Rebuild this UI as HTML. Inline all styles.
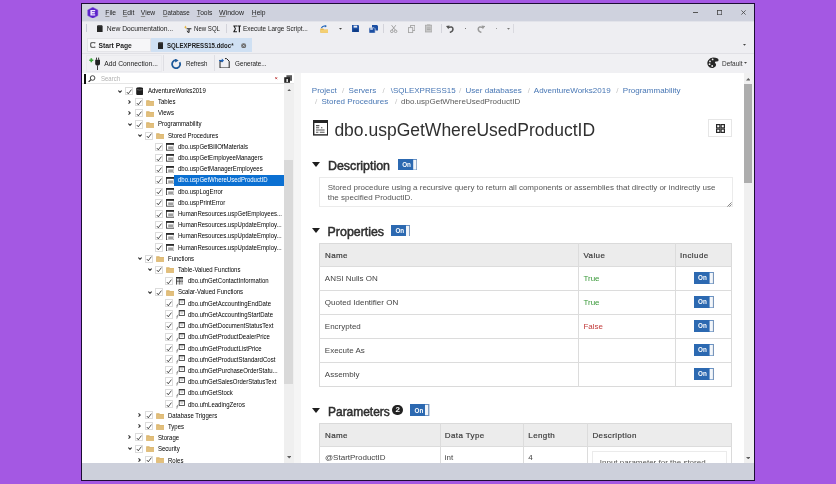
<!DOCTYPE html>
<html><head><meta charset="utf-8"><style>
*{margin:0;padding:0;box-sizing:border-box}
html,body{width:836px;height:484px;overflow:hidden;background:#a458e3;font-family:"Liberation Sans", sans-serif}
.r{position:absolute;display:block}
.t{position:absolute;white-space:nowrap;color:#333}
.t u{text-decoration:underline;text-decoration-color:#8a8a8a;text-decoration-thickness:0.6px;text-underline-offset:1.2px}
.cb{position:absolute;width:8.4px;height:8.2px;border:0.8px solid #dcdcdc;box-sizing:border-box;background:#fff}
.cb svg{position:absolute;left:-0.3px;top:-0.3px}
.fold{position:absolute;width:7.8px;height:5.8px;background:#dfbb72;border-top:1px solid #e9cd92;box-sizing:border-box}
.dbi{position:absolute;width:6.6px;height:8px;background:#1e1e1e;border-radius:3.3px/1.8px}
.proc{position:absolute;width:8.6px;height:7.2px;border:0.9px solid #333;border-top:1.8px solid #222;box-sizing:border-box;background:#fff}
.proc i{position:absolute;left:1.2px;top:1.2px;width:4.6px;height:2.6px;background:#9a9a9a}
.tvf{position:absolute;width:7.4px;height:8px;border-top:1.6px solid #333;border-left:0.9px solid #444;border-right:0.9px solid #444;box-sizing:border-box;background:linear-gradient(90deg,transparent 45%,#666 45%,#666 58%,transparent 58%)}
.svf{position:absolute;width:8px;height:8px}
.svf::before{content:"";position:absolute;left:3px;top:0;width:5px;height:5.6px;border:0.9px solid #555;border-top:1.6px solid #444;box-sizing:border-box}
.svf::after{content:"";position:absolute;left:0.6px;top:4px;width:1.6px;height:3.8px;border-left:0.9px solid #777;transform:skewX(-25deg)}
.tt{position:absolute;font-size:6.7px;line-height:11px;color:#000;white-space:nowrap;transform:scaleX(0.9);transform-origin:0 0}
.tt.sel{color:#fff}
.selbg{position:absolute;background:#0b70d2}

.t{position:absolute;white-space:nowrap;color:#333}
.bl{color:#4776b4}
.sl{color:#c4c4c4}
.gr{color:#5a5a5a}
.h1{color:#303030}
.h2{color:#2e2e2e;-webkit-text-stroke:0.5px #2e2e2e}
.gt{color:#555}
.th{color:#3c3c3c;letter-spacing:0.4px;-webkit-text-stroke:0.2px #3c3c3c}
.td{color:#444}
.gv{color:#3a9a3a}
.rv{color:#c23b3b}
.picon{position:absolute;border:1.5px solid #333;border-top:3px solid #333;background:#fff}
.picon i{position:absolute;left:2px;top:2px;width:5px;height:3px;border-top:1.2px solid #555;border-bottom:1.2px solid #555}
.picon b{position:absolute;left:2px;top:6.5px;width:8px;height:1.2px;background:#777}
.gbtn{position:absolute;border:1px solid #e6e6e6;background:#fff}
.gbtn i{position:absolute;width:4px;height:4px;border:1.2px solid #333;border-radius:0.5px}
.tri{position:absolute;width:0;height:0;border-left:4px solid transparent;border-right:4px solid transparent;border-top:5px solid #1e1e1e}
.tog{position:absolute}
.tog span{position:absolute;left:4.2px;top:2.4px;font-size:6.3px;line-height:7px;font-weight:bold;color:#fff}
.ta{position:absolute;border:1px solid #ebebeb;background:#fff}
.grip{position:absolute;width:5px;height:5px;background:linear-gradient(135deg,transparent 45%,#999 45%,#999 55%,transparent 55%,transparent 70%,#999 70%,#999 80%,transparent 80%)}
.box{position:absolute;border:1px solid #dadada;background:#fff}
.thbg{position:absolute;background:#ececec}
.hl{position:absolute;height:1px;background:#dcdcdc}
.vl{position:absolute;width:1px;background:#dcdcdc}
.badge{position:absolute;width:11.3px;height:11.3px;border-radius:50%;background:#222;color:#fff;font-weight:bold;font-size:8px;line-height:11.3px;text-align:center}

</style></head><body style="filter:blur(0.5px)">
<div class="r" style="left:81px;top:3px;width:674px;height:478px;background:#eeeef2;border:1px solid #1c0c34;box-sizing:border-box"></div>
<div class="r" style="left:82px;top:4px;width:672px;height:16.6px;background:#cfd2de;"></div>
<div class="r" style="left:82px;top:20.6px;width:672px;height:0.8px;background:#e2e3ea;"></div>
<svg class="r" style="left:87.2px;top:6.8px" width="11.6" height="11.6" viewBox="0 0 11.6 11.6"><path d="M5.8 0.2 L10.9 3 L10.9 8.6 L5.8 11.4 L0.7 8.6 L0.7 3 Z" fill="#5b23c8" stroke="#8a5ae6" stroke-width="0.5"/><path d="M3.4 2.9 H8.2 V4.2 H4.9 V5.1 H7.8 V6.4 H4.9 V7.3 H8.2 V8.6 H3.4 Z" fill="#efe4ff"/></svg>
<div class="t" style="left:105.3px;top:8.00px;font-size:6.7px;line-height:9px;color:#252525"><u>F</u>ile</div>
<div class="t" style="left:122.8px;top:8.00px;font-size:6.7px;line-height:9px;color:#252525"><u>E</u>dit</div>
<div class="t" style="left:140.8px;top:8.00px;font-size:6.7px;line-height:9px;color:#252525"><u>V</u>iew</div>
<div class="t" style="left:162.9px;top:8.00px;font-size:6.7px;line-height:9px;color:#252525;transform:scaleX(0.93);transform-origin:0 0"><u>D</u>atabase</div>
<div class="t" style="left:196.8px;top:8.00px;font-size:6.7px;line-height:9px;color:#252525"><u>T</u>ools</div>
<div class="t" style="left:218.8px;top:8.00px;font-size:6.7px;line-height:9px;color:#252525;transform:scaleX(1.05);transform-origin:0 0"><u>W</u>indow</div>
<div class="t" style="left:251.8px;top:8.00px;font-size:6.7px;line-height:9px;color:#252525"><u>H</u>elp</div>
<div class="r" style="left:693.4px;top:12.4px;width:4.4px;height:0.8px;background:#555;"></div>
<svg class="r" style="left:716.8px;top:9.8px" width="5.4" height="5.4" viewBox="0 0 5.4 5.4"><rect x="0.6" y="0.6" width="4.2" height="4.2" fill="none" stroke="#444" stroke-width="0.8"/></svg>
<svg class="r" style="left:740.8px;top:10px" width="5" height="5" viewBox="0 0 5 5"><path d="M0.4 0.4 L4.6 4.6 M4.6 0.4 L0.4 4.6" stroke="#444" stroke-width="0.8"/></svg>
<div class="r" style="left:86.3px;top:23.8px;width:1px;height:8px;background:#c5c8d6;"></div>
<svg class="r" style="left:97.4px;top:24.8px" width="5.6" height="7.4" viewBox="0 0 5.6 7.4"><rect x="0" y="0.8" width="5.6" height="6.6" fill="#262626"/><rect x="0.5" y="0" width="4.6" height="1.2" fill="#555"/></svg>
<div class="t" style="left:106.8px;top:24.00px;font-size:6.75px;line-height:9px;color:#222">New Documentation...</div>
<svg class="r" style="left:183.5px;top:24.8px" width="8" height="8" viewBox="0 0 8 8"><path d="M1.5 0.5 L2.1 1.8 L3.4 2.2 L2.1 2.6 L1.5 3.9 L0.9 2.6 L-0.4 2.2 L0.9 1.8Z" fill="#e7b53a"/><path d="M2.6 3.2 H7.4 V4.2 H5.6 V7.4 H4.4 V4.2 H2.6Z" fill="#2a2a2a"/><path d="M3.2 5.6 Q3.2 7.6 5 7.6" stroke="#2a2a2a" stroke-width="0.9" fill="none"/></svg>
<div class="t" style="left:193.8px;top:24.00px;font-size:6.75px;line-height:9px;color:#222;transform:scaleX(0.9);transform-origin:0 0">New SQL</div>
<div class="r" style="left:226.3px;top:24px;width:0.8px;height:9px;background:#d3d3da;"></div>
<svg class="r" style="left:232.6px;top:25px" width="8.6" height="7.6" viewBox="0 0 8.6 7.6"><path d="M0.3 0.4 H4 V1.4 H1.8 L3 3.8 L1.8 6.2 H4 V7.2 H0.3 V6.6 L1.9 3.8 L0.3 1 Z" fill="#1e1e1e"/><path d="M4.4 0.4 H8.4 V1.5 H7 V7.2 H5.8 V1.5 H4.4Z" fill="#1e1e1e"/></svg>
<div class="t" style="left:243.0px;top:24.00px;font-size:6.75px;line-height:9px;color:#222;transform:scaleX(0.95);transform-origin:0 0">Execute Large Script...</div>
<svg class="r" style="left:319.8px;top:24.6px" width="8.6" height="8" viewBox="0 0 8.6 8"><path d="M0.3 3.6 H3.2 L4 4.4 H8.2 V7.7 H0.3Z" fill="#e9b94c"/><path d="M0.8 5 H8 V7.7 H0.8Z" fill="#f4cf73"/><path d="M1.5 3.2 Q2.2 0.6 5.4 1" stroke="#1f63b8" stroke-width="1.1" fill="none"/><path d="M4.8 0 L7 1.1 L4.9 2.4Z" fill="#1f63b8"/></svg>
<svg class="r" style="left:338.6px;top:27.8px" width="3" height="2" viewBox="0 0 3 2"><path d="M0 0 H3 L1.5 1.8Z" fill="#444"/></svg>
<svg class="r" style="left:351.5px;top:25.3px" width="7.4" height="7" viewBox="0 0 7.4 7"><path d="M0 0 H6.2 L7.4 1.2 V7 H0Z" fill="#1c4fa3"/><rect x="1.6" y="0.6" width="3.6" height="2" fill="#e9eef8"/><rect x="1.3" y="4.3" width="4.8" height="2.7" fill="#0f3c86"/></svg>
<svg class="r" style="left:368.6px;top:24.6px" width="9.2" height="8.2" viewBox="0 0 9.2 8.2"><path d="M3 0 H8 L9.2 1.2 V5.4 H3Z" fill="#1c4fa3"/><path d="M0 2.8 H5.2 L6.2 3.8 V8.2 H0Z" fill="#1c4fa3" stroke="#eeeef2" stroke-width="0.6"/><rect x="1.2" y="3.3" width="2.6" height="1.4" fill="#e9eef8"/></svg>
<div class="r" style="left:383px;top:24px;width:0.8px;height:9px;background:#d3d3da;"></div>
<svg class="r" style="left:390.3px;top:24.6px" width="7.4" height="8" viewBox="0 0 7.4 8"><path d="M1.6 0.2 L5.4 5.2 M5.8 0.2 L2 5.2" stroke="#9a9a9a" stroke-width="0.9"/><circle cx="1.8" cy="6.3" r="1.3" fill="none" stroke="#9a9a9a" stroke-width="0.9"/><circle cx="5.6" cy="6.3" r="1.3" fill="none" stroke="#9a9a9a" stroke-width="0.9"/></svg>
<svg class="r" style="left:407.8px;top:24.6px" width="7.4" height="8" viewBox="0 0 7.4 8"><rect x="2.6" y="0.5" width="4.2" height="5" fill="none" stroke="#a5a5a5" stroke-width="0.9"/><rect x="0.5" y="2.6" width="4.2" height="5" fill="#eeeef2" stroke="#a5a5a5" stroke-width="0.9"/></svg>
<svg class="r" style="left:424.8px;top:24.4px" width="7.4" height="8.4" viewBox="0 0 7.4 8.4"><rect x="0.5" y="1.2" width="6.4" height="6.8" fill="#c9c9c9" stroke="#a8a8a8" stroke-width="0.8"/><rect x="2" y="0.3" width="3.4" height="1.8" fill="#b5b5b5"/><path d="M1.8 4 H5.6 M1.8 5.6 H5.6" stroke="#9a9a9a" stroke-width="0.7"/></svg>
<div class="r" style="left:440.8px;top:24px;width:0.8px;height:9px;background:#d3d3da;"></div>
<svg class="r" style="left:446px;top:24.8px" width="8.6" height="8" viewBox="0 0 8.6 8"><path d="M1.8 2.6 Q6.8 0.8 7 4 Q7 6.6 3.8 7.4" stroke="#555" stroke-width="1.5" fill="none"/><path d="M0 1 L3.6 0.6 L2.4 4.2Z" fill="#555"/></svg>
<div class="r" style="left:464.6px;top:28.3px;width:1.5px;height:1.2px;background:#777;"></div>
<svg class="r" style="left:477.3px;top:24.8px" width="8.2" height="8" viewBox="0 0 8.2 8"><path d="M6.4 2.6 Q1.4 0.8 1.2 4 Q1.2 6.6 4.4 7.4" stroke="#9b9b9b" stroke-width="1.5" fill="none"/><path d="M8.2 1 L4.6 0.6 L5.8 4.2Z" fill="#9b9b9b"/></svg>
<div class="r" style="left:495.6px;top:28.3px;width:1.5px;height:1.2px;background:#999;"></div>
<svg class="r" style="left:506.6px;top:27.8px" width="3" height="2" viewBox="0 0 3 2"><path d="M0 0 H3 L1.5 1.8Z" fill="#777"/></svg>
<div class="r" style="left:513.2px;top:24px;width:0.8px;height:9px;background:#d9d9df;"></div>
<div class="r" style="left:87px;top:38.4px;width:64px;height:13.6px;background:#f6f6f8;border:1px solid #e4e4e8;box-sizing:border-box"></div>
<svg class="r" style="left:89.6px;top:42px" width="6" height="6" viewBox="0 0 6 6"><path d="M5.3 1.2 Q4.4 0.4 3 0.4 Q0.5 0.4 0.5 3 Q0.5 5.6 3 5.6 Q4.4 5.6 5.3 4.8" stroke="#6b6b6b" stroke-width="1.3" fill="none"/></svg>
<div class="t" style="left:98.4px;top:41.00px;font-size:6.75px;line-height:9px;color:#1e1e1e;font-weight:bold">Start Page</div>
<div class="r" style="left:151.3px;top:38.4px;width:100.7px;height:14px;background:#cfe0f3;"></div>
<svg class="r" style="left:157.9px;top:41.6px" width="5.4" height="7" viewBox="0 0 5.4 7"><rect x="0" y="0.8" width="5.4" height="6.2" fill="#262626"/><rect x="0.5" y="0" width="4.4" height="1.2" fill="#555"/></svg>
<div class="t" style="left:167.1px;top:41.00px;font-size:6.75px;line-height:9px;color:#1e1e1e;font-weight:bold;transform:scaleX(0.9);transform-origin:0 0">SQLEXPRESS15.ddoc*</div>
<svg class="r" style="left:241.4px;top:42.6px" width="5.4" height="5.4" viewBox="0 0 5.4 5.4"><circle cx="2.7" cy="2.7" r="2.5" fill="#6a6a6a"/><path d="M1.7 1.7 L3.7 3.7 M3.7 1.7 L1.7 3.7" stroke="#cfe0f3" stroke-width="0.7"/></svg>
<svg class="r" style="left:742.5px;top:43.6px" width="3" height="2" viewBox="0 0 3 2"><path d="M0 0 H3 L1.5 1.8Z" fill="#444"/></svg>
<div class="r" style="left:82px;top:53px;width:672px;height:20px;background:#f0f0f3;border-top:1px solid #e0e0e5;box-sizing:border-box"></div>
<div class="r" style="left:86.4px;top:55px;width:75.4px;height:16.5px;background:#f0f0f3;border:1px solid #eaeaee;box-sizing:border-box"></div>
<div class="r" style="left:163px;top:55px;width:0.8px;height:16px;background:#dedee3;"></div>
<div class="r" style="left:213.8px;top:55px;width:0.8px;height:16px;background:#dedee3;"></div>
<svg class="r" style="left:88.6px;top:56.8px" width="13" height="13.4" viewBox="0 0 13 13.4"><path d="M2.3 1.2 V5.2 M0.3 3.2 H4.3" stroke="#3aa43a" stroke-width="1.6"/><rect x="7.1" y="0.6" width="0.9" height="2.2" fill="#222"/><rect x="9.2" y="0.6" width="0.9" height="2.2" fill="#222"/><path d="M6.2 2.8 H11 V6.6 Q11 8.4 9.2 8.6 H7.9 Q6.2 8.4 6.2 6.6Z" fill="#222"/><rect x="8.1" y="8.4" width="0.9" height="4.6" fill="#222"/></svg>
<div class="t" style="left:104.3px;top:59.00px;font-size:6.75px;line-height:9px;color:#222">Add Connection...</div>
<svg class="r" style="left:170.6px;top:59px" width="11" height="10.4" viewBox="0 0 11 10.4"><path d="M8.6 3.2 A4 4 0 1 1 4.8 1.2" stroke="#1e5a9a" stroke-width="1.8" fill="none"/><path d="M4 -0.6 L7.6 1.4 L4.2 3.6Z" fill="#1e5a9a"/></svg>
<div class="t" style="left:185.8px;top:59.00px;font-size:6.75px;line-height:9px;color:#222;transform:scaleX(0.91);transform-origin:0 0">Refresh</div>
<svg class="r" style="left:219.4px;top:57.6px" width="11" height="10.4" viewBox="0 0 11 10.4"><path d="M3.6 3.2 H1 V10 H10.2 V3.2 L7.6 0.6 H6" stroke="#222" stroke-width="1" fill="none"/><path d="M0 2.6 H3.4" stroke="#1f63b8" stroke-width="1.3"/><path d="M2.8 0.4 L5 2.6 L2.8 4.8Z" fill="#1f63b8"/></svg>
<div class="t" style="left:234.6px;top:59.00px;font-size:6.75px;line-height:9px;color:#222;transform:scaleX(0.935);transform-origin:0 0">Generate...</div>
<svg class="r" style="left:706.8px;top:57.4px" width="11.8" height="11.2" viewBox="0 0 11.8 11.2"><path d="M6 0.4 Q11.6 0.4 11.6 3.2 Q11.6 4.8 9 4.6 Q7 4.6 8.6 6.6 Q10.2 9 6.6 10.8 Q3 11.6 1.2 9 Q-0.6 6 1.2 3.2 Q3 0.4 6 0.4Z" fill="#262626"/><circle cx="5.6" cy="2.4" r="0.9" fill="#eee"/><circle cx="3" cy="4.4" r="0.9" fill="#eee"/><circle cx="2.6" cy="7.2" r="0.9" fill="#eee"/><circle cx="5.2" cy="9" r="0.9" fill="#eee"/></svg>
<div class="t" style="left:722.0px;top:59.00px;font-size:6.75px;line-height:9px;color:#333;transform:scaleX(0.96);transform-origin:0 0">Default</div>
<svg class="r" style="left:744.3px;top:62.4px" width="3" height="2" viewBox="0 0 3 2"><path d="M0 0 H3 L1.5 1.8Z" fill="#444"/></svg>
<div class="r" style="left:82px;top:73px;width:212px;height:390.2px;background:#fff;"></div>
<div class="r" style="left:82px;top:73px;width:212px;height:11.3px;background:#fff;border-bottom:1px solid #e6e6e6;box-sizing:border-box"></div>
<div class="r" style="left:84.3px;top:74px;width:1.6px;height:10px;background:#111;"></div>
<svg class="r" style="left:88.4px;top:74.6px" width="7.6" height="7.6" viewBox="0 0 7.6 7.6"><circle cx="4.6" cy="3" r="2.3" fill="none" stroke="#333" stroke-width="0.9"/><path d="M3 4.6 L0.6 7" stroke="#333" stroke-width="1.2"/></svg>
<div class="t" style="left:100.7px;top:74.00px;font-size:6.75px;line-height:9px;color:#b0b0b0;transform:scaleX(0.89);transform-origin:0 0">Search</div>
<svg class="r" style="left:275.4px;top:77.4px" width="2.4" height="2.4" viewBox="0 0 2.4 2.4"><path d="M0.2 0.2 L2.2 2.2 M2.2 0.2 L0.2 2.2" stroke="#b33" stroke-width="0.8"/></svg>
<svg class="r" style="left:283.8px;top:74.6px" width="8.4" height="8" viewBox="0 0 8.4 8"><rect x="2.4" y="0.2" width="5.8" height="5.6" fill="#5a5a5a"/><rect x="0.2" y="2.2" width="5.8" height="5.6" fill="#262626"/><rect x="2.4" y="4" width="1.6" height="3" fill="#ddd"/></svg>
<div class="r" style="left:283.8px;top:84.3px;width:9.8px;height:378.9px;background:#efefef;"></div>
<svg class="r" style="left:286.8px;top:88.8px" width="4.4" height="2.4" viewBox="0 0 4.4 2.4"><path d="M0 2.4 L2.2 0 L4.4 2.4Z" fill="#606060"/></svg>
<div class="r" style="left:284.3px;top:160.4px;width:8.8px;height:224px;background:#d9d9d9;"></div>
<svg class="r" style="left:286.8px;top:456.4px" width="4.4" height="2.4" viewBox="0 0 4.4 2.4"><path d="M0 0 L2.2 2.4 L4.4 0Z" fill="#606060"/></svg>
<div class="r" style="left:293.6px;top:73px;width:7.2px;height:390.2px;background:#f5f5f5;"></div>
<div class="r" style="left:300.8px;top:73px;width:443.2px;height:390.2px;background:#fff;"></div>
<div class="r" style="left:744px;top:73px;width:10px;height:390.2px;background:#f0f0f0;"></div>
<svg class="r" style="left:745.6px;top:78.4px" width="4.6" height="2.4" viewBox="0 0 4.6 2.4"><path d="M0 2.4 L2.3 0 L4.6 2.4Z" fill="#606060"/></svg>
<div class="r" style="left:744.4px;top:83.6px;width:7.4px;height:99.4px;background:#adadad;"></div>
<svg class="r" style="left:745.6px;top:456.6px" width="4.6" height="2.4" viewBox="0 0 4.6 2.4"><path d="M0 0 L2.3 2.4 L4.6 0Z" fill="#606060"/></svg>
<div class="r" style="left:82px;top:463.2px;width:672px;height:16.8px;background:#cdd0db;"></div>
<div class="r" style="left:0;top:0;width:836px;height:463.2px;overflow:hidden">
<svg class="r" style="left:117.6px;top:89.6px" width="4" height="3"><path d="M0.4 0.5 L2 2.3 L3.6 0.5" stroke="#333" stroke-width="1.1" fill="none"/></svg><div class="cb" style="left:124.6px;top:86.9px"><svg width="8" height="8"><path d="M1.8 4 L3.3 5.8 L6.4 1.6" stroke="#222" stroke-width="0.8" fill="none"/></svg></div><svg class="r" style="left:135.9px;top:86.9px" width="7.4" height="8.6" viewBox="0 0 7.4 8.6"><path d="M0.2 1.6 Q0.2 0.2 3.7 0.2 Q7.2 0.2 7.2 1.6 V7 Q7.2 8.4 3.7 8.4 Q0.2 8.4 0.2 7Z" fill="#1e1e1e"/><path d="M1 2.6 Q3.7 3.6 6.4 2.6" stroke="#888" stroke-width="0.6" fill="none"/></svg><div class="tt" style="left:148.0px;top:84.80px">AdventureWorks2019</div>
<svg class="r" style="left:128.2px;top:100.2px" width="3" height="4"><path d="M0.5 0.4 L2.3 2 L0.5 3.6" stroke="#333" stroke-width="1.1" fill="none"/></svg><div class="cb" style="left:134.6px;top:98.1px"><svg width="8" height="8"><path d="M1.8 4 L3.3 5.8 L6.4 1.6" stroke="#222" stroke-width="0.8" fill="none"/></svg></div><svg class="r" style="left:145.7px;top:99.6px" width="8.4" height="6" viewBox="0 0 8.4 6"><path d="M0.2 0.2 H3.2 L4 0.9 H8.2 V5.8 H0.2Z" fill="#d9b26a"/><rect x="0.2" y="1.5" width="8" height="4.3" fill="#e2bf7d"/></svg><div class="tt" style="left:158.0px;top:96.00px">Tables</div>
<svg class="r" style="left:128.2px;top:111.3px" width="3" height="4"><path d="M0.5 0.4 L2.3 2 L0.5 3.6" stroke="#333" stroke-width="1.1" fill="none"/></svg><div class="cb" style="left:134.6px;top:109.2px"><svg width="8" height="8"><path d="M1.8 4 L3.3 5.8 L6.4 1.6" stroke="#222" stroke-width="0.8" fill="none"/></svg></div><svg class="r" style="left:145.7px;top:110.7px" width="8.4" height="6" viewBox="0 0 8.4 6"><path d="M0.2 0.2 H3.2 L4 0.9 H8.2 V5.8 H0.2Z" fill="#d9b26a"/><rect x="0.2" y="1.5" width="8" height="4.3" fill="#e2bf7d"/></svg><div class="tt" style="left:158.0px;top:107.21px">Views</div>
<svg class="r" style="left:127.6px;top:123.1px" width="4" height="3"><path d="M0.4 0.5 L2 2.3 L3.6 0.5" stroke="#333" stroke-width="1.1" fill="none"/></svg><div class="cb" style="left:134.6px;top:120.4px"><svg width="8" height="8"><path d="M1.8 4 L3.3 5.8 L6.4 1.6" stroke="#222" stroke-width="0.8" fill="none"/></svg></div><svg class="r" style="left:145.7px;top:121.9px" width="8.4" height="6" viewBox="0 0 8.4 6"><path d="M0.2 0.2 H3.2 L4 0.9 H8.2 V5.8 H0.2Z" fill="#d9b26a"/><rect x="0.2" y="1.5" width="8" height="4.3" fill="#e2bf7d"/></svg><div class="tt" style="left:158.0px;top:118.42px">Programmability</div>
<svg class="r" style="left:137.6px;top:134.3px" width="4" height="3"><path d="M0.4 0.5 L2 2.3 L3.6 0.5" stroke="#333" stroke-width="1.1" fill="none"/></svg><div class="cb" style="left:144.6px;top:131.6px"><svg width="8" height="8"><path d="M1.8 4 L3.3 5.8 L6.4 1.6" stroke="#222" stroke-width="0.8" fill="none"/></svg></div><svg class="r" style="left:155.7px;top:133.1px" width="8.4" height="6" viewBox="0 0 8.4 6"><path d="M0.2 0.2 H3.2 L4 0.9 H8.2 V5.8 H0.2Z" fill="#d9b26a"/><rect x="0.2" y="1.5" width="8" height="4.3" fill="#e2bf7d"/></svg><div class="tt" style="left:168.0px;top:129.62px">Stored Procedures</div>
<div class="cb" style="left:154.6px;top:142.8px"><svg width="8" height="8"><path d="M1.8 4 L3.3 5.8 L6.4 1.6" stroke="#222" stroke-width="0.8" fill="none"/></svg></div><svg class="r" style="left:165.6px;top:143.2px" width="8.6" height="7.6" viewBox="0 0 8.6 7.6"><rect x="0.4" y="0.8" width="7.8" height="6.4" fill="#fff" stroke="#2a2a2a" stroke-width="0.8"/><rect x="0" y="0" width="8.6" height="1.8" fill="#2a2a2a"/><rect x="2.2" y="3.4" width="4.8" height="2.8" fill="#a0a0a0"/></svg><div class="tt" style="left:178.0px;top:140.82px">dbo.uspGetBillOfMaterials</div>
<div class="cb" style="left:154.6px;top:154.0px"><svg width="8" height="8"><path d="M1.8 4 L3.3 5.8 L6.4 1.6" stroke="#222" stroke-width="0.8" fill="none"/></svg></div><svg class="r" style="left:165.6px;top:154.3px" width="8.6" height="7.6" viewBox="0 0 8.6 7.6"><rect x="0.4" y="0.8" width="7.8" height="6.4" fill="#fff" stroke="#2a2a2a" stroke-width="0.8"/><rect x="0" y="0" width="8.6" height="1.8" fill="#2a2a2a"/><rect x="2.2" y="3.4" width="4.8" height="2.8" fill="#a0a0a0"/></svg><div class="tt" style="left:178.0px;top:152.03px">dbo.uspGetEmployeeManagers</div>
<div class="cb" style="left:154.6px;top:165.1px"><svg width="8" height="8"><path d="M1.8 4 L3.3 5.8 L6.4 1.6" stroke="#222" stroke-width="0.8" fill="none"/></svg></div><svg class="r" style="left:165.6px;top:165.5px" width="8.6" height="7.6" viewBox="0 0 8.6 7.6"><rect x="0.4" y="0.8" width="7.8" height="6.4" fill="#fff" stroke="#2a2a2a" stroke-width="0.8"/><rect x="0" y="0" width="8.6" height="1.8" fill="#2a2a2a"/><rect x="2.2" y="3.4" width="4.8" height="2.8" fill="#a0a0a0"/></svg><div class="tt" style="left:178.0px;top:163.23px">dbo.uspGetManagerEmployees</div>
<div class="cb" style="left:154.6px;top:176.3px"><svg width="8" height="8"><path d="M1.8 4 L3.3 5.8 L6.4 1.6" stroke="#222" stroke-width="0.8" fill="none"/></svg></div><svg class="r" style="left:165.6px;top:176.7px" width="8.6" height="7.6" viewBox="0 0 8.6 7.6"><rect x="0.4" y="0.8" width="7.8" height="6.4" fill="#fff" stroke="#2a2a2a" stroke-width="0.8"/><rect x="0" y="0" width="8.6" height="1.8" fill="#2a2a2a"/><rect x="2.2" y="3.4" width="4.8" height="2.8" fill="#a0a0a0"/></svg><div class="selbg" style="left:174.1px;top:174.5px;width:109.8px;height:11.1px"></div><div class="tt sel" style="left:178.0px;top:174.44px">dbo.uspGetWhereUsedProductID</div>
<div class="cb" style="left:154.6px;top:187.5px"><svg width="8" height="8"><path d="M1.8 4 L3.3 5.8 L6.4 1.6" stroke="#222" stroke-width="0.8" fill="none"/></svg></div><svg class="r" style="left:165.6px;top:187.9px" width="8.6" height="7.6" viewBox="0 0 8.6 7.6"><rect x="0.4" y="0.8" width="7.8" height="6.4" fill="#fff" stroke="#2a2a2a" stroke-width="0.8"/><rect x="0" y="0" width="8.6" height="1.8" fill="#2a2a2a"/><rect x="2.2" y="3.4" width="4.8" height="2.8" fill="#a0a0a0"/></svg><div class="tt" style="left:178.0px;top:185.65px">dbo.uspLogError</div>
<div class="cb" style="left:154.6px;top:198.7px"><svg width="8" height="8"><path d="M1.8 4 L3.3 5.8 L6.4 1.6" stroke="#222" stroke-width="0.8" fill="none"/></svg></div><svg class="r" style="left:165.6px;top:199.0px" width="8.6" height="7.6" viewBox="0 0 8.6 7.6"><rect x="0.4" y="0.8" width="7.8" height="6.4" fill="#fff" stroke="#2a2a2a" stroke-width="0.8"/><rect x="0" y="0" width="8.6" height="1.8" fill="#2a2a2a"/><rect x="2.2" y="3.4" width="4.8" height="2.8" fill="#a0a0a0"/></svg><div class="tt" style="left:178.0px;top:196.85px">dbo.uspPrintError</div>
<div class="cb" style="left:154.6px;top:209.8px"><svg width="8" height="8"><path d="M1.8 4 L3.3 5.8 L6.4 1.6" stroke="#222" stroke-width="0.8" fill="none"/></svg></div><svg class="r" style="left:165.6px;top:210.2px" width="8.6" height="7.6" viewBox="0 0 8.6 7.6"><rect x="0.4" y="0.8" width="7.8" height="6.4" fill="#fff" stroke="#2a2a2a" stroke-width="0.8"/><rect x="0" y="0" width="8.6" height="1.8" fill="#2a2a2a"/><rect x="2.2" y="3.4" width="4.8" height="2.8" fill="#a0a0a0"/></svg><div class="tt" style="left:178.0px;top:208.06px">HumanResources.uspGetEmployees...</div>
<div class="cb" style="left:154.6px;top:221.0px"><svg width="8" height="8"><path d="M1.8 4 L3.3 5.8 L6.4 1.6" stroke="#222" stroke-width="0.8" fill="none"/></svg></div><svg class="r" style="left:165.6px;top:221.4px" width="8.6" height="7.6" viewBox="0 0 8.6 7.6"><rect x="0.4" y="0.8" width="7.8" height="6.4" fill="#fff" stroke="#2a2a2a" stroke-width="0.8"/><rect x="0" y="0" width="8.6" height="1.8" fill="#2a2a2a"/><rect x="2.2" y="3.4" width="4.8" height="2.8" fill="#a0a0a0"/></svg><div class="tt" style="left:178.0px;top:219.26px">HumanResources.uspUpdateEmploy...</div>
<div class="cb" style="left:154.6px;top:232.2px"><svg width="8" height="8"><path d="M1.8 4 L3.3 5.8 L6.4 1.6" stroke="#222" stroke-width="0.8" fill="none"/></svg></div><svg class="r" style="left:165.6px;top:232.6px" width="8.6" height="7.6" viewBox="0 0 8.6 7.6"><rect x="0.4" y="0.8" width="7.8" height="6.4" fill="#fff" stroke="#2a2a2a" stroke-width="0.8"/><rect x="0" y="0" width="8.6" height="1.8" fill="#2a2a2a"/><rect x="2.2" y="3.4" width="4.8" height="2.8" fill="#a0a0a0"/></svg><div class="tt" style="left:178.0px;top:230.46px">HumanResources.uspUpdateEmploy...</div>
<div class="cb" style="left:154.6px;top:243.4px"><svg width="8" height="8"><path d="M1.8 4 L3.3 5.8 L6.4 1.6" stroke="#222" stroke-width="0.8" fill="none"/></svg></div><svg class="r" style="left:165.6px;top:243.8px" width="8.6" height="7.6" viewBox="0 0 8.6 7.6"><rect x="0.4" y="0.8" width="7.8" height="6.4" fill="#fff" stroke="#2a2a2a" stroke-width="0.8"/><rect x="0" y="0" width="8.6" height="1.8" fill="#2a2a2a"/><rect x="2.2" y="3.4" width="4.8" height="2.8" fill="#a0a0a0"/></svg><div class="tt" style="left:178.0px;top:241.67px">HumanResources.uspUpdateEmploy...</div>
<svg class="r" style="left:137.6px;top:257.2px" width="4" height="3"><path d="M0.4 0.5 L2 2.3 L3.6 0.5" stroke="#333" stroke-width="1.1" fill="none"/></svg><div class="cb" style="left:144.6px;top:254.5px"><svg width="8" height="8"><path d="M1.8 4 L3.3 5.8 L6.4 1.6" stroke="#222" stroke-width="0.8" fill="none"/></svg></div><svg class="r" style="left:155.7px;top:256.0px" width="8.4" height="6" viewBox="0 0 8.4 6"><path d="M0.2 0.2 H3.2 L4 0.9 H8.2 V5.8 H0.2Z" fill="#d9b26a"/><rect x="0.2" y="1.5" width="8" height="4.3" fill="#e2bf7d"/></svg><div class="tt" style="left:168.0px;top:252.87px">Functions</div>
<svg class="r" style="left:147.6px;top:268.4px" width="4" height="3"><path d="M0.4 0.5 L2 2.3 L3.6 0.5" stroke="#333" stroke-width="1.1" fill="none"/></svg><div class="cb" style="left:154.6px;top:265.7px"><svg width="8" height="8"><path d="M1.8 4 L3.3 5.8 L6.4 1.6" stroke="#222" stroke-width="0.8" fill="none"/></svg></div><svg class="r" style="left:165.7px;top:267.2px" width="8.4" height="6" viewBox="0 0 8.4 6"><path d="M0.2 0.2 H3.2 L4 0.9 H8.2 V5.8 H0.2Z" fill="#d9b26a"/><rect x="0.2" y="1.5" width="8" height="4.3" fill="#e2bf7d"/></svg><div class="tt" style="left:178.0px;top:264.08px">Table-Valued Functions</div>
<div class="cb" style="left:164.6px;top:276.9px"><svg width="8" height="8"><path d="M1.8 4 L3.3 5.8 L6.4 1.6" stroke="#222" stroke-width="0.8" fill="none"/></svg></div><svg class="r" style="left:175.9px;top:277.2px" width="7.6" height="8" viewBox="0 0 7.6 8"><rect x="0" y="0" width="7.6" height="1.6" fill="#2a2a2a"/><path d="M0.5 1.4 V7.6 M3.8 1.4 V7.6 M7.1 1.4 V7.6 M0.5 4.2 H7.1" stroke="#3a3a3a" stroke-width="0.9"/><path d="M2.1 1.6 V7.6 M5.5 1.6 V7.6" stroke="#888" stroke-width="0.6"/></svg><div class="tt" style="left:188.0px;top:275.29px">dbo.ufnGetContactInformation</div>
<svg class="r" style="left:147.6px;top:290.8px" width="4" height="3"><path d="M0.4 0.5 L2 2.3 L3.6 0.5" stroke="#333" stroke-width="1.1" fill="none"/></svg><div class="cb" style="left:154.6px;top:288.1px"><svg width="8" height="8"><path d="M1.8 4 L3.3 5.8 L6.4 1.6" stroke="#222" stroke-width="0.8" fill="none"/></svg></div><svg class="r" style="left:165.7px;top:289.6px" width="8.4" height="6" viewBox="0 0 8.4 6"><path d="M0.2 0.2 H3.2 L4 0.9 H8.2 V5.8 H0.2Z" fill="#d9b26a"/><rect x="0.2" y="1.5" width="8" height="4.3" fill="#e2bf7d"/></svg><div class="tt" style="left:178.0px;top:286.49px">Scalar-Valued Functions</div>
<div class="cb" style="left:164.6px;top:299.2px"><svg width="8" height="8"><path d="M1.8 4 L3.3 5.8 L6.4 1.6" stroke="#222" stroke-width="0.8" fill="none"/></svg></div><svg class="r" style="left:175.9px;top:299.2px" width="9" height="9" viewBox="0 0 9 9"><rect x="3.2" y="0.5" width="5.3" height="5" fill="#fff" stroke="#4a4a4a" stroke-width="0.9"/><rect x="3.2" y="0.1" width="5.3" height="1.3" fill="#3a3a3a"/><path d="M4.6 3 H7.2" stroke="#888" stroke-width="0.7"/><path d="M2.4 4.6 Q1.4 5 1.3 6.4 L0.8 8.6" stroke="#777" stroke-width="0.8" fill="none"/><path d="M0.4 6.4 H2.2" stroke="#888" stroke-width="0.6"/></svg><div class="tt" style="left:188.0px;top:297.69px">dbo.ufnGetAccountingEndDate</div>
<div class="cb" style="left:164.6px;top:310.4px"><svg width="8" height="8"><path d="M1.8 4 L3.3 5.8 L6.4 1.6" stroke="#222" stroke-width="0.8" fill="none"/></svg></div><svg class="r" style="left:175.9px;top:310.4px" width="9" height="9" viewBox="0 0 9 9"><rect x="3.2" y="0.5" width="5.3" height="5" fill="#fff" stroke="#4a4a4a" stroke-width="0.9"/><rect x="3.2" y="0.1" width="5.3" height="1.3" fill="#3a3a3a"/><path d="M4.6 3 H7.2" stroke="#888" stroke-width="0.7"/><path d="M2.4 4.6 Q1.4 5 1.3 6.4 L0.8 8.6" stroke="#777" stroke-width="0.8" fill="none"/><path d="M0.4 6.4 H2.2" stroke="#888" stroke-width="0.6"/></svg><div class="tt" style="left:188.0px;top:308.90px">dbo.ufnGetAccountingStartDate</div>
<div class="cb" style="left:164.6px;top:321.6px"><svg width="8" height="8"><path d="M1.8 4 L3.3 5.8 L6.4 1.6" stroke="#222" stroke-width="0.8" fill="none"/></svg></div><svg class="r" style="left:175.9px;top:321.6px" width="9" height="9" viewBox="0 0 9 9"><rect x="3.2" y="0.5" width="5.3" height="5" fill="#fff" stroke="#4a4a4a" stroke-width="0.9"/><rect x="3.2" y="0.1" width="5.3" height="1.3" fill="#3a3a3a"/><path d="M4.6 3 H7.2" stroke="#888" stroke-width="0.7"/><path d="M2.4 4.6 Q1.4 5 1.3 6.4 L0.8 8.6" stroke="#777" stroke-width="0.8" fill="none"/><path d="M0.4 6.4 H2.2" stroke="#888" stroke-width="0.6"/></svg><div class="tt" style="left:188.0px;top:320.10px">dbo.ufnGetDocumentStatusText</div>
<div class="cb" style="left:164.6px;top:332.8px"><svg width="8" height="8"><path d="M1.8 4 L3.3 5.8 L6.4 1.6" stroke="#222" stroke-width="0.8" fill="none"/></svg></div><svg class="r" style="left:175.9px;top:332.8px" width="9" height="9" viewBox="0 0 9 9"><rect x="3.2" y="0.5" width="5.3" height="5" fill="#fff" stroke="#4a4a4a" stroke-width="0.9"/><rect x="3.2" y="0.1" width="5.3" height="1.3" fill="#3a3a3a"/><path d="M4.6 3 H7.2" stroke="#888" stroke-width="0.7"/><path d="M2.4 4.6 Q1.4 5 1.3 6.4 L0.8 8.6" stroke="#777" stroke-width="0.8" fill="none"/><path d="M0.4 6.4 H2.2" stroke="#888" stroke-width="0.6"/></svg><div class="tt" style="left:188.0px;top:331.31px">dbo.ufnGetProductDealerPrice</div>
<div class="cb" style="left:164.6px;top:343.9px"><svg width="8" height="8"><path d="M1.8 4 L3.3 5.8 L6.4 1.6" stroke="#222" stroke-width="0.8" fill="none"/></svg></div><svg class="r" style="left:175.9px;top:343.9px" width="9" height="9" viewBox="0 0 9 9"><rect x="3.2" y="0.5" width="5.3" height="5" fill="#fff" stroke="#4a4a4a" stroke-width="0.9"/><rect x="3.2" y="0.1" width="5.3" height="1.3" fill="#3a3a3a"/><path d="M4.6 3 H7.2" stroke="#888" stroke-width="0.7"/><path d="M2.4 4.6 Q1.4 5 1.3 6.4 L0.8 8.6" stroke="#777" stroke-width="0.8" fill="none"/><path d="M0.4 6.4 H2.2" stroke="#888" stroke-width="0.6"/></svg><div class="tt" style="left:188.0px;top:342.51px">dbo.ufnGetProductListPrice</div>
<div class="cb" style="left:164.6px;top:355.1px"><svg width="8" height="8"><path d="M1.8 4 L3.3 5.8 L6.4 1.6" stroke="#222" stroke-width="0.8" fill="none"/></svg></div><svg class="r" style="left:175.9px;top:355.1px" width="9" height="9" viewBox="0 0 9 9"><rect x="3.2" y="0.5" width="5.3" height="5" fill="#fff" stroke="#4a4a4a" stroke-width="0.9"/><rect x="3.2" y="0.1" width="5.3" height="1.3" fill="#3a3a3a"/><path d="M4.6 3 H7.2" stroke="#888" stroke-width="0.7"/><path d="M2.4 4.6 Q1.4 5 1.3 6.4 L0.8 8.6" stroke="#777" stroke-width="0.8" fill="none"/><path d="M0.4 6.4 H2.2" stroke="#888" stroke-width="0.6"/></svg><div class="tt" style="left:188.0px;top:353.72px">dbo.ufnGetProductStandardCost</div>
<div class="cb" style="left:164.6px;top:366.3px"><svg width="8" height="8"><path d="M1.8 4 L3.3 5.8 L6.4 1.6" stroke="#222" stroke-width="0.8" fill="none"/></svg></div><svg class="r" style="left:175.9px;top:366.3px" width="9" height="9" viewBox="0 0 9 9"><rect x="3.2" y="0.5" width="5.3" height="5" fill="#fff" stroke="#4a4a4a" stroke-width="0.9"/><rect x="3.2" y="0.1" width="5.3" height="1.3" fill="#3a3a3a"/><path d="M4.6 3 H7.2" stroke="#888" stroke-width="0.7"/><path d="M2.4 4.6 Q1.4 5 1.3 6.4 L0.8 8.6" stroke="#777" stroke-width="0.8" fill="none"/><path d="M0.4 6.4 H2.2" stroke="#888" stroke-width="0.6"/></svg><div class="tt" style="left:188.0px;top:364.93px">dbo.ufnGetPurchaseOrderStatu...</div>
<div class="cb" style="left:164.6px;top:377.4px"><svg width="8" height="8"><path d="M1.8 4 L3.3 5.8 L6.4 1.6" stroke="#222" stroke-width="0.8" fill="none"/></svg></div><svg class="r" style="left:175.9px;top:377.4px" width="9" height="9" viewBox="0 0 9 9"><rect x="3.2" y="0.5" width="5.3" height="5" fill="#fff" stroke="#4a4a4a" stroke-width="0.9"/><rect x="3.2" y="0.1" width="5.3" height="1.3" fill="#3a3a3a"/><path d="M4.6 3 H7.2" stroke="#888" stroke-width="0.7"/><path d="M2.4 4.6 Q1.4 5 1.3 6.4 L0.8 8.6" stroke="#777" stroke-width="0.8" fill="none"/><path d="M0.4 6.4 H2.2" stroke="#888" stroke-width="0.6"/></svg><div class="tt" style="left:188.0px;top:376.13px">dbo.ufnGetSalesOrderStatusText</div>
<div class="cb" style="left:164.6px;top:388.6px"><svg width="8" height="8"><path d="M1.8 4 L3.3 5.8 L6.4 1.6" stroke="#222" stroke-width="0.8" fill="none"/></svg></div><svg class="r" style="left:175.9px;top:388.6px" width="9" height="9" viewBox="0 0 9 9"><rect x="3.2" y="0.5" width="5.3" height="5" fill="#fff" stroke="#4a4a4a" stroke-width="0.9"/><rect x="3.2" y="0.1" width="5.3" height="1.3" fill="#3a3a3a"/><path d="M4.6 3 H7.2" stroke="#888" stroke-width="0.7"/><path d="M2.4 4.6 Q1.4 5 1.3 6.4 L0.8 8.6" stroke="#777" stroke-width="0.8" fill="none"/><path d="M0.4 6.4 H2.2" stroke="#888" stroke-width="0.6"/></svg><div class="tt" style="left:188.0px;top:387.34px">dbo.ufnGetStock</div>
<div class="cb" style="left:164.6px;top:399.8px"><svg width="8" height="8"><path d="M1.8 4 L3.3 5.8 L6.4 1.6" stroke="#222" stroke-width="0.8" fill="none"/></svg></div><svg class="r" style="left:175.9px;top:399.8px" width="9" height="9" viewBox="0 0 9 9"><rect x="3.2" y="0.5" width="5.3" height="5" fill="#fff" stroke="#4a4a4a" stroke-width="0.9"/><rect x="3.2" y="0.1" width="5.3" height="1.3" fill="#3a3a3a"/><path d="M4.6 3 H7.2" stroke="#888" stroke-width="0.7"/><path d="M2.4 4.6 Q1.4 5 1.3 6.4 L0.8 8.6" stroke="#777" stroke-width="0.8" fill="none"/><path d="M0.4 6.4 H2.2" stroke="#888" stroke-width="0.6"/></svg><div class="tt" style="left:188.0px;top:398.54px">dbo.ufnLeadingZeros</div>
<svg class="r" style="left:138.2px;top:413.1px" width="3" height="4"><path d="M0.5 0.4 L2.3 2 L0.5 3.6" stroke="#333" stroke-width="1.1" fill="none"/></svg><div class="cb" style="left:144.6px;top:411.0px"><svg width="8" height="8"><path d="M1.8 4 L3.3 5.8 L6.4 1.6" stroke="#222" stroke-width="0.8" fill="none"/></svg></div><svg class="r" style="left:155.7px;top:412.5px" width="8.4" height="6" viewBox="0 0 8.4 6"><path d="M0.2 0.2 H3.2 L4 0.9 H8.2 V5.8 H0.2Z" fill="#d9b26a"/><rect x="0.2" y="1.5" width="8" height="4.3" fill="#e2bf7d"/></svg><div class="tt" style="left:168.0px;top:409.75px">Database Triggers</div>
<svg class="r" style="left:138.2px;top:424.2px" width="3" height="4"><path d="M0.5 0.4 L2.3 2 L0.5 3.6" stroke="#333" stroke-width="1.1" fill="none"/></svg><div class="cb" style="left:144.6px;top:422.2px"><svg width="8" height="8"><path d="M1.8 4 L3.3 5.8 L6.4 1.6" stroke="#222" stroke-width="0.8" fill="none"/></svg></div><svg class="r" style="left:155.7px;top:423.7px" width="8.4" height="6" viewBox="0 0 8.4 6"><path d="M0.2 0.2 H3.2 L4 0.9 H8.2 V5.8 H0.2Z" fill="#d9b26a"/><rect x="0.2" y="1.5" width="8" height="4.3" fill="#e2bf7d"/></svg><div class="tt" style="left:168.0px;top:420.95px">Types</div>
<svg class="r" style="left:128.2px;top:435.4px" width="3" height="4"><path d="M0.5 0.4 L2.3 2 L0.5 3.6" stroke="#333" stroke-width="1.1" fill="none"/></svg><div class="cb" style="left:134.6px;top:433.3px"><svg width="8" height="8"><path d="M1.8 4 L3.3 5.8 L6.4 1.6" stroke="#222" stroke-width="0.8" fill="none"/></svg></div><svg class="r" style="left:145.7px;top:434.8px" width="8.4" height="6" viewBox="0 0 8.4 6"><path d="M0.2 0.2 H3.2 L4 0.9 H8.2 V5.8 H0.2Z" fill="#d9b26a"/><rect x="0.2" y="1.5" width="8" height="4.3" fill="#e2bf7d"/></svg><div class="tt" style="left:158.0px;top:432.15px">Storage</div>
<svg class="r" style="left:127.6px;top:447.2px" width="4" height="3"><path d="M0.4 0.5 L2 2.3 L3.6 0.5" stroke="#333" stroke-width="1.1" fill="none"/></svg><div class="cb" style="left:134.6px;top:444.5px"><svg width="8" height="8"><path d="M1.8 4 L3.3 5.8 L6.4 1.6" stroke="#222" stroke-width="0.8" fill="none"/></svg></div><svg class="r" style="left:145.7px;top:446.0px" width="8.4" height="6" viewBox="0 0 8.4 6"><path d="M0.2 0.2 H3.2 L4 0.9 H8.2 V5.8 H0.2Z" fill="#d9b26a"/><rect x="0.2" y="1.5" width="8" height="4.3" fill="#e2bf7d"/></svg><div class="tt" style="left:158.0px;top:443.36px">Security</div>
<svg class="r" style="left:138.2px;top:457.8px" width="3" height="4"><path d="M0.5 0.4 L2.3 2 L0.5 3.6" stroke="#333" stroke-width="1.1" fill="none"/></svg><div class="cb" style="left:144.6px;top:455.7px"><svg width="8" height="8"><path d="M1.8 4 L3.3 5.8 L6.4 1.6" stroke="#222" stroke-width="0.8" fill="none"/></svg></div><svg class="r" style="left:155.7px;top:457.2px" width="8.4" height="6" viewBox="0 0 8.4 6"><path d="M0.2 0.2 H3.2 L4 0.9 H8.2 V5.8 H0.2Z" fill="#d9b26a"/><rect x="0.2" y="1.5" width="8" height="4.3" fill="#e2bf7d"/></svg><div class="tt" style="left:168.0px;top:454.56px">Roles</div>
<div class="t bl" style="left:311.8px;top:85.00px;font-size:8px;line-height:11px;">Project</div>
<div class="t sl" style="left:342.0px;top:85.00px;font-size:8px;line-height:11px;">/</div>
<div class="t bl" style="left:348.6px;top:85.00px;font-size:8px;line-height:11px;">Servers</div>
<div class="t sl" style="left:382.6px;top:85.00px;font-size:8px;line-height:11px;">/</div>
<div class="t bl" style="left:390.7px;top:85.00px;font-size:8px;line-height:11px;">\SQLEXPRESS15</div>
<div class="t sl" style="left:458.9px;top:85.00px;font-size:8px;line-height:11px;">/</div>
<div class="t bl" style="left:465.6px;top:85.00px;font-size:8px;line-height:11px;">User databases</div>
<div class="t sl" style="left:527.8px;top:85.00px;font-size:8px;line-height:11px;">/</div>
<div class="t bl" style="left:533.8px;top:85.00px;font-size:8px;line-height:11px;">AdventureWorks2019</div>
<div class="t sl" style="left:616.2px;top:85.00px;font-size:8px;line-height:11px;">/</div>
<div class="t bl" style="left:622.8px;top:85.00px;font-size:8px;line-height:11px;">Programmability</div>
<div class="t sl" style="left:315.0px;top:96.00px;font-size:8px;line-height:11px;">/</div>
<div class="t bl" style="left:321.5px;top:96.00px;font-size:8px;line-height:11px;">Stored Procedures</div>
<div class="t sl" style="left:395.0px;top:96.00px;font-size:8px;line-height:11px;">/</div>
<div class="t gr" style="left:401.0px;top:96.00px;font-size:8px;line-height:11px;">dbo.uspGetWhereUsedProductID</div>
<svg class="r" style="left:312.6px;top:120.4px" width="15.4" height="15.6" viewBox="0 0 15.4 15.6"><rect x="0.7" y="0.7" width="14" height="14.2" fill="#fff" stroke="#262626" stroke-width="1.4"/><rect x="0" y="0" width="15.4" height="3" fill="#262626"/><path d="M3 5.6 H6.4 M3 7.8 H6.2 M8 7.8 H9.4 M3 10 H11.6 M3 12.2 H5.4 M6.8 12.2 H11.6" stroke="#555" stroke-width="1.1"/></svg>
<div class="t h1" style="left:334.4px;top:119.00px;font-size:17.5px;line-height:23px;">dbo.uspGetWhereUsedProductID</div>
<div class="gbtn" style="left:708px;top:118.5px;width:23.6px;height:18.3px"></div><svg class="r" style="left:715.6px;top:123.8px" width="9" height="9"><rect x="0.6" y="0.6" width="3.3" height="3.3" fill="none" stroke="#262626" stroke-width="1.2"/><rect x="5.1" y="0.6" width="3.3" height="3.3" fill="none" stroke="#262626" stroke-width="1.2"/><rect x="0.6" y="5.1" width="3.3" height="3.3" fill="none" stroke="#262626" stroke-width="1.2"/><rect x="5.1" y="5.1" width="3.3" height="3.3" fill="none" stroke="#262626" stroke-width="1.2"/></svg>
<div class="tri" style="left:312.2px;top:162.2px"></div>
<div class="t h2" style="left:328.0px;top:158.00px;font-size:12.4px;line-height:17px;">Description</div>
<div class="tog" style="left:398.0px;top:158.6px;width:19.4px;height:11.4px"><svg class="r" style="left:0;top:0" width="19.4" height="11.4" viewBox="0 0 19.4 11.4"><rect x="0" y="0" width="19.4" height="11.4" fill="#2c69b1"/><rect x="15.2" y="0.7" width="3.5" height="10.0" fill="#f3f6fa"/><rect x="18.5" y="0" width="0.9" height="11.4" fill="#7f97b8"/></svg><span>On</span></div>
<div class="ta" style="left:319.4px;top:177px;width:413.6px;height:30.2px"></div>
<div class="t gt" style="left:327.7px;top:182.00px;font-size:8px;line-height:11px;">Stored procedure using a recursive query to return all components or assemblies that directly or indirectly use</div>
<div class="t gt" style="left:327.7px;top:192.00px;font-size:8px;line-height:11px;">the specified ProductID.</div>
<svg class="r" style="left:726.6px;top:201.6px" width="5" height="5"><path d="M0.4 4.6 L4.6 0.4 M2.4 4.6 L4.6 2.4" stroke="#777" stroke-width="0.9"/></svg>
<div class="tri" style="left:312.4px;top:228.4px"></div>
<div class="t h2" style="left:327.6px;top:224.00px;font-size:12.4px;line-height:17px;">Properties</div>
<div class="tog" style="left:391.2px;top:224.6px;width:19.2px;height:11.8px"><svg class="r" style="left:0;top:0" width="19.2" height="11.8" viewBox="0 0 19.2 11.8"><rect x="0" y="0" width="19.2" height="11.8" fill="#2c69b1"/><rect x="15.0" y="0.7" width="3.5" height="10.4" fill="#f3f6fa"/><rect x="18.3" y="0" width="0.9" height="11.8" fill="#7f97b8"/></svg><span>On</span></div>
<div class="box" style="left:319.4px;top:243.2px;width:412.4px;height:143.5px"></div>
<div class="thbg" style="left:320.4px;top:244.2px;width:410.4px;height:22px"></div>
<div class="hl" style="left:319.4px;top:265.8px;width:412.4px"></div>
<div class="hl" style="left:319.4px;top:289.8px;width:412.4px"></div>
<div class="hl" style="left:319.4px;top:313.8px;width:412.4px"></div>
<div class="hl" style="left:319.4px;top:337.8px;width:412.4px"></div>
<div class="hl" style="left:319.4px;top:361.9px;width:412.4px"></div>
<div class="vl" style="left:577.8px;top:243.2px;height:143.5px"></div>
<div class="vl" style="left:674.8px;top:243.2px;height:143.5px"></div>
<div class="t th" style="left:325.0px;top:250.00px;font-size:8px;line-height:11px;">Name</div>
<div class="t th" style="left:583.4px;top:250.00px;font-size:8px;line-height:11px;">Value</div>
<div class="t th" style="left:680.0px;top:250.00px;font-size:8px;line-height:11px;">Include</div>
<div class="t td" style="left:324.8px;top:273.00px;font-size:8px;line-height:11px;">ANSI Nulls ON</div>
<div class="t gv" style="left:583.4px;top:273.00px;font-size:8px;line-height:11px;">True</div>
<div class="tog" style="left:693.9px;top:272.0px;width:19.8px;height:12.2px"><svg class="r" style="left:0;top:0" width="19.8" height="12.2" viewBox="0 0 19.8 12.2"><rect x="0" y="0" width="19.8" height="12.2" fill="#2c69b1"/><rect x="15.6" y="0.7" width="3.5" height="10.8" fill="#f3f6fa"/><rect x="18.9" y="0" width="0.9" height="12.2" fill="#7f97b8"/></svg><span>On</span></div>
<div class="t td" style="left:324.8px;top:297.00px;font-size:8px;line-height:11px;">Quoted Identifier ON</div>
<div class="t gv" style="left:583.4px;top:297.00px;font-size:8px;line-height:11px;">True</div>
<div class="tog" style="left:693.9px;top:296.0px;width:19.8px;height:12.2px"><svg class="r" style="left:0;top:0" width="19.8" height="12.2" viewBox="0 0 19.8 12.2"><rect x="0" y="0" width="19.8" height="12.2" fill="#2c69b1"/><rect x="15.6" y="0.7" width="3.5" height="10.8" fill="#f3f6fa"/><rect x="18.9" y="0" width="0.9" height="12.2" fill="#7f97b8"/></svg><span>On</span></div>
<div class="t td" style="left:324.8px;top:321.00px;font-size:8px;line-height:11px;">Encrypted</div>
<div class="t rv" style="left:583.4px;top:321.00px;font-size:8px;line-height:11px;">False</div>
<div class="tog" style="left:693.9px;top:320.0px;width:19.8px;height:12.2px"><svg class="r" style="left:0;top:0" width="19.8" height="12.2" viewBox="0 0 19.8 12.2"><rect x="0" y="0" width="19.8" height="12.2" fill="#2c69b1"/><rect x="15.6" y="0.7" width="3.5" height="10.8" fill="#f3f6fa"/><rect x="18.9" y="0" width="0.9" height="12.2" fill="#7f97b8"/></svg><span>On</span></div>
<div class="t td" style="left:324.8px;top:345.00px;font-size:8px;line-height:11px;">Execute As</div>
<div class="tog" style="left:693.9px;top:344.0px;width:19.8px;height:12.2px"><svg class="r" style="left:0;top:0" width="19.8" height="12.2" viewBox="0 0 19.8 12.2"><rect x="0" y="0" width="19.8" height="12.2" fill="#2c69b1"/><rect x="15.6" y="0.7" width="3.5" height="10.8" fill="#f3f6fa"/><rect x="18.9" y="0" width="0.9" height="12.2" fill="#7f97b8"/></svg><span>On</span></div>
<div class="t td" style="left:324.8px;top:369.00px;font-size:8px;line-height:11px;">Assembly</div>
<div class="tog" style="left:693.9px;top:368.0px;width:19.8px;height:12.2px"><svg class="r" style="left:0;top:0" width="19.8" height="12.2" viewBox="0 0 19.8 12.2"><rect x="0" y="0" width="19.8" height="12.2" fill="#2c69b1"/><rect x="15.6" y="0.7" width="3.5" height="10.8" fill="#f3f6fa"/><rect x="18.9" y="0" width="0.9" height="12.2" fill="#7f97b8"/></svg><span>On</span></div>
<div class="tri" style="left:312.2px;top:408.2px"></div>
<div class="t h2" style="left:327.8px;top:404.00px;font-size:12.4px;line-height:17px;transform:scaleX(0.965);transform-origin:0 0">Parameters</div>
<div class="badge" style="left:392.3px;top:404.7px;width:10.8px;height:10.8px;line-height:10.8px">2</div>
<div class="tog" style="left:410.4px;top:404.4px;width:19.2px;height:12.0px"><svg class="r" style="left:0;top:0" width="19.2" height="12.0" viewBox="0 0 19.2 12.0"><rect x="0" y="0" width="19.2" height="12.0" fill="#2c69b1"/><rect x="15.0" y="0.7" width="3.5" height="10.6" fill="#f3f6fa"/><rect x="18.3" y="0" width="0.9" height="12.0" fill="#7f97b8"/></svg><span>On</span></div>
<div class="box" style="left:319.4px;top:423px;width:412.4px;height:60px"></div>
<div class="thbg" style="left:320.4px;top:424px;width:410.4px;height:22px"></div>
<div class="hl" style="left:319.4px;top:445.5px;width:412.4px"></div>
<div class="vl" style="left:440.1px;top:423px;height:60px"></div>
<div class="vl" style="left:522.9px;top:423px;height:60px"></div>
<div class="vl" style="left:587.1px;top:423px;height:60px"></div>
<div class="t th" style="left:325.0px;top:430.00px;font-size:8px;line-height:11px;">Name</div>
<div class="t th" style="left:444.8px;top:430.00px;font-size:8px;line-height:11px;">Data Type</div>
<div class="t th" style="left:528.3px;top:430.00px;font-size:8px;line-height:11px;">Length</div>
<div class="t th" style="left:592.4px;top:430.00px;font-size:8px;line-height:11px;">Description</div>
<div class="t td" style="left:325.0px;top:452.00px;font-size:8px;line-height:11px;">@StartProductID</div>
<div class="t td" style="left:444.8px;top:452.00px;font-size:8px;line-height:11px;">int</div>
<div class="t td" style="left:528.3px;top:452.00px;font-size:8px;line-height:11px;">4</div>
<div class="ta" style="left:592px;top:451.3px;width:134.6px;height:30px"></div>
<div class="t gt" style="left:599.8px;top:457.00px;font-size:8px;line-height:11px;">Input parameter for the stored</div>
</div>
</body></html>
